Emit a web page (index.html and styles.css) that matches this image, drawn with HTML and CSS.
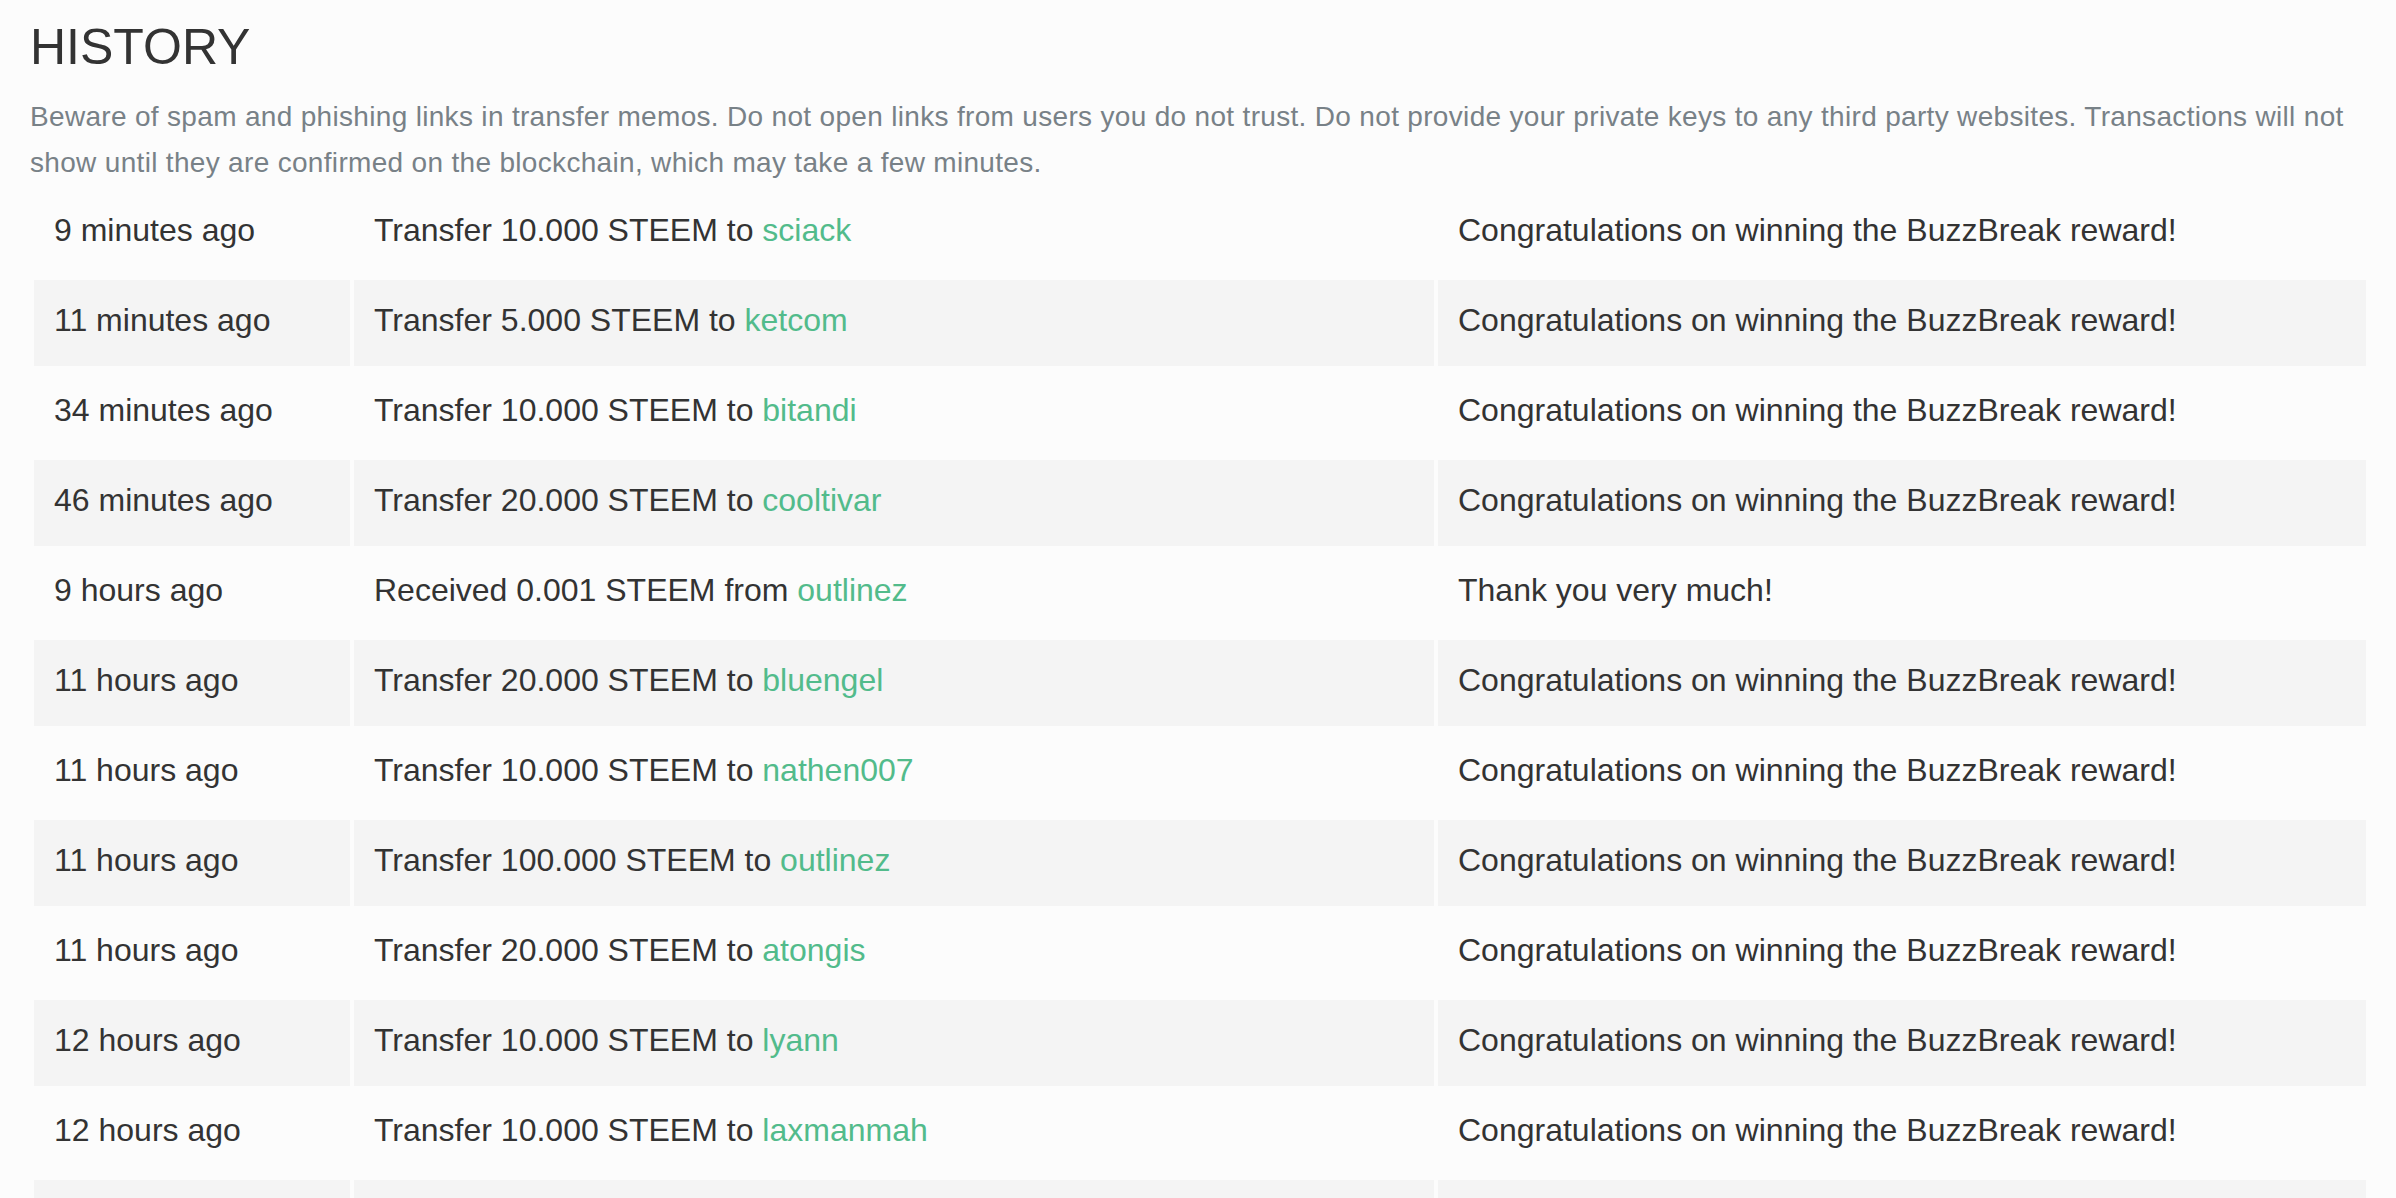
FILE: index.html
```html
<!DOCTYPE html>
<html lang="en">
<head>
<meta charset="utf-8">
<title>History</title>
<link rel="stylesheet" href="styles.css">
</head>
<body>
<div class="page">
  <h1 class="title">HISTORY</h1>
  <p class="notice">Beware of spam and phishing links in transfer memos. Do not open links from users you do not trust. Do not provide your private keys to any third party websites. Transactions will not show until they are confirmed on the blockchain, which may take a few minutes.</p>
  <table class="history">
    <colgroup><col class="c-time"><col class="c-op"><col class="c-memo"></colgroup>
    <tbody>
      <tr><td>9 minutes ago</td><td>Transfer 10.000 STEEM to <a class="user" href="#">sciack</a></td><td>Congratulations on winning the BuzzBreak reward!</td></tr>
      <tr><td>11 minutes ago</td><td>Transfer 5.000 STEEM to <a class="user" href="#">ketcom</a></td><td>Congratulations on winning the BuzzBreak reward!</td></tr>
      <tr><td>34 minutes ago</td><td>Transfer 10.000 STEEM to <a class="user" href="#">bitandi</a></td><td>Congratulations on winning the BuzzBreak reward!</td></tr>
      <tr><td>46 minutes ago</td><td>Transfer 20.000 STEEM to <a class="user" href="#">cooltivar</a></td><td>Congratulations on winning the BuzzBreak reward!</td></tr>
      <tr><td>9 hours ago</td><td>Received 0.001 STEEM from <a class="user" href="#">outlinez</a></td><td>Thank you very much!</td></tr>
      <tr><td>11 hours ago</td><td>Transfer 20.000 STEEM to <a class="user" href="#">bluengel</a></td><td>Congratulations on winning the BuzzBreak reward!</td></tr>
      <tr><td>11 hours ago</td><td>Transfer 10.000 STEEM to <a class="user" href="#">nathen007</a></td><td>Congratulations on winning the BuzzBreak reward!</td></tr>
      <tr><td>11 hours ago</td><td>Transfer 100.000 STEEM to <a class="user" href="#">outlinez</a></td><td>Congratulations on winning the BuzzBreak reward!</td></tr>
      <tr><td>11 hours ago</td><td>Transfer 20.000 STEEM to <a class="user" href="#">atongis</a></td><td>Congratulations on winning the BuzzBreak reward!</td></tr>
      <tr><td>12 hours ago</td><td>Transfer 10.000 STEEM to <a class="user" href="#">lyann</a></td><td>Congratulations on winning the BuzzBreak reward!</td></tr>
      <tr><td>12 hours ago</td><td>Transfer 10.000 STEEM to <a class="user" href="#">laxmanmah</a></td><td>Congratulations on winning the BuzzBreak reward!</td></tr>
      <tr class="blank"><td></td><td></td><td></td></tr>
    </tbody>
  </table>
</div>
</body>
</html>
```

FILE: styles.css
```css
html, body {
  margin: 0;
  padding: 0;
  background: #fcfcfc;
}

body {
  font-family: "Liberation Sans", Arial, Helvetica, sans-serif;
  color: #333333;
}

.page {
  padding: 17px 26px 0 30px;
}

.title {
  margin: 0;
  font-size: 50px;
  line-height: 60px;
  font-weight: 400;
  color: #333333;
}

.notice {
  margin: 17px 0 0 0;
  font-size: 28px;
  line-height: 46px;
  letter-spacing: 0.32px;
  color: #788187;
}

.history {
  width: 100%;
  table-layout: fixed;
  border-collapse: separate;
  border-spacing: 4px;
  margin: 0;
  font-size: 32px;
}

.c-time { width: 316px; }
.c-op { width: 1080px; }

.history tr {
  height: 86px;
}

.history td {
  padding: 0 20px 6px 20px;
  vertical-align: middle;
  white-space: nowrap;
  line-height: 1.15;
}

.history tr:nth-child(even) td {
  background: #f4f4f4;
}

.user {
  color: #52bb8b;
  text-decoration: none;
}
```
